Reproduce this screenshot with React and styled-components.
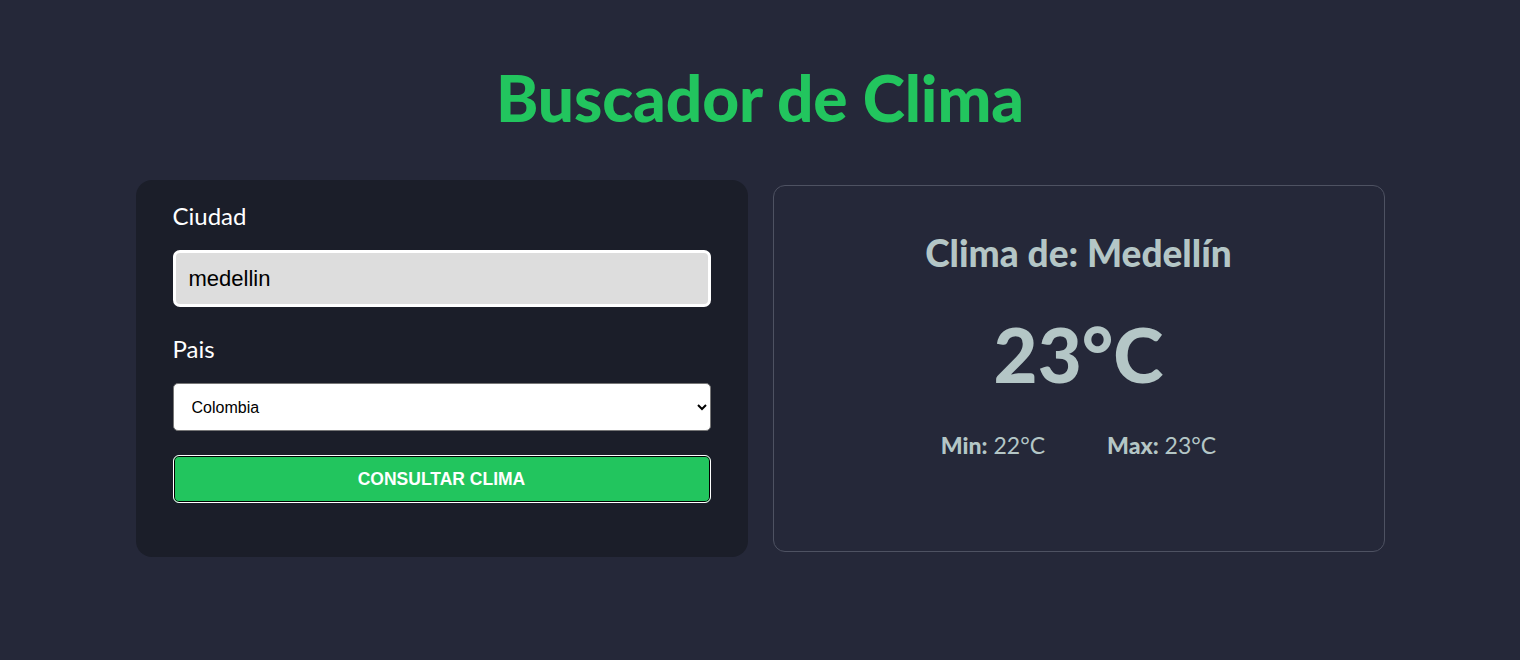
import React from "react";
import styled, { createGlobalStyle } from "styled-components";

const Global = createGlobalStyle`
  html, body { margin: 0; padding: 0; }
  body {
    background: #252839;
    font-family: "Lato", "Noto Sans", sans-serif;
  }
  * { box-sizing: border-box; }
`;

const Page = styled.main`
  min-height: 660px;
  padding-top: 60px;
`;

const Title = styled.h1`
  margin: 0 0 44px;
  text-align: center;
  color: #22c55e;
  font-family: "Lato", sans-serif;
  font-weight: 900;
  font-size: 64px;
  line-height: 76px;
  letter-spacing: -0.1px;
`;

const Columns = styled.div`
  width: 1249px;
  margin: 0 auto;
  display: grid;
  grid-template-columns: 612px 612px;
  gap: 25px;
  align-items: center;
`;

const FormCard = styled.form`
  background: #1b1e29;
  border-radius: 16px;
  padding: 21px 37px 54px;
  display: flex;
  flex-direction: column;
`;

const Field = styled.div`
  display: flex;
  flex-direction: column;
  margin-bottom: ${(p) => p.$mb || 0}px;
`;

const Label = styled.label`
  color: #ffffff;
  font-family: "Lato", sans-serif;
  font-size: 24px;
  line-height: 30px;
  margin-bottom: ${(p) => p.$mb}px;
`;

const TextInput = styled.input`
  height: 57px;
  border: 3px solid #ffffff;
  border-radius: 7px;
  background: #dddddd;
  padding: 0 13px;
  font-family: "Liberation Sans", Arial, sans-serif;
  font-size: 22px;
  color: #000;
  outline: none;
`;

const Select = styled.select`
  height: 48px;
  border: 1px solid #767676;
  border-radius: 5px;
  background: #ffffff;
  padding: 0 14px;
  font-family: "Liberation Sans", Arial, sans-serif;
  font-size: 16px;
  color: #000;
`;

const Button = styled.button`
  height: 48px;
  border: 1px solid #ffffff;
  box-shadow: inset 0 0 0 1px #000;
  border-radius: 6px;
  background: #22c55e;
  color: #ffffff;
  font-family: "Liberation Sans", Arial, sans-serif;
  font-weight: 700;
  font-size: 17.5px;
  text-transform: uppercase;
  cursor: pointer;
`;

const ResultCard = styled.section`
  height: 367px;
  border: 1px solid #4e5262;
  border-radius: 12px;
  display: flex;
  flex-direction: column;
  align-items: center;
  padding-top: 45px;
  color: #b4c6c6;
`;

const City = styled.h2`
  margin: 0;
  font-family: "Lato", sans-serif;
  font-weight: 900;
  font-size: 37px;
  line-height: 44px;
`;

const Temp = styled.p`
  margin: 37px 0 0;
  font-family: "Lato", sans-serif;
  font-weight: 900;
  font-size: 76px;
  line-height: 84px;
`;

const Range = styled.div`
  margin-top: 34px;
  display: flex;
  gap: 62px;
  font-family: "Lato", sans-serif;
  font-size: 23px;
  line-height: 30px;
`;

const RangeItem = styled.p`
  margin: 0;
  span { font-weight: 900; }
`;

export default function App() {
  return (
    <>
      <Global />
      <Page>
        <Title>Buscador de Clima</Title>
        <Columns>
          <FormCard onSubmit={(e) => e.preventDefault()}>
            <Field $mb={27}>
              <Label htmlFor="ciudad" $mb={19}>Ciudad</Label>
              <TextInput id="ciudad" type="text" defaultValue="medellin" />
            </Field>
            <Field $mb={24}>
              <Label htmlFor="pais" $mb={19}>Pais</Label>
              <Select id="pais" defaultValue="CO">
                <option value="CO">Colombia</option>
                <option value="AR">Argentina</option>
                <option value="MX">México</option>
              </Select>
            </Field>
            <Button type="submit">Consultar Clima</Button>
          </FormCard>
          <ResultCard>
            <City>Clima de: Medellín</City>
            <Temp>23°C</Temp>
            <Range>
              <RangeItem><span>Min:</span> 22°C</RangeItem>
              <RangeItem><span>Max:</span> 23°C</RangeItem>
            </Range>
          </ResultCard>
        </Columns>
      </Page>
    </>
  );
}
